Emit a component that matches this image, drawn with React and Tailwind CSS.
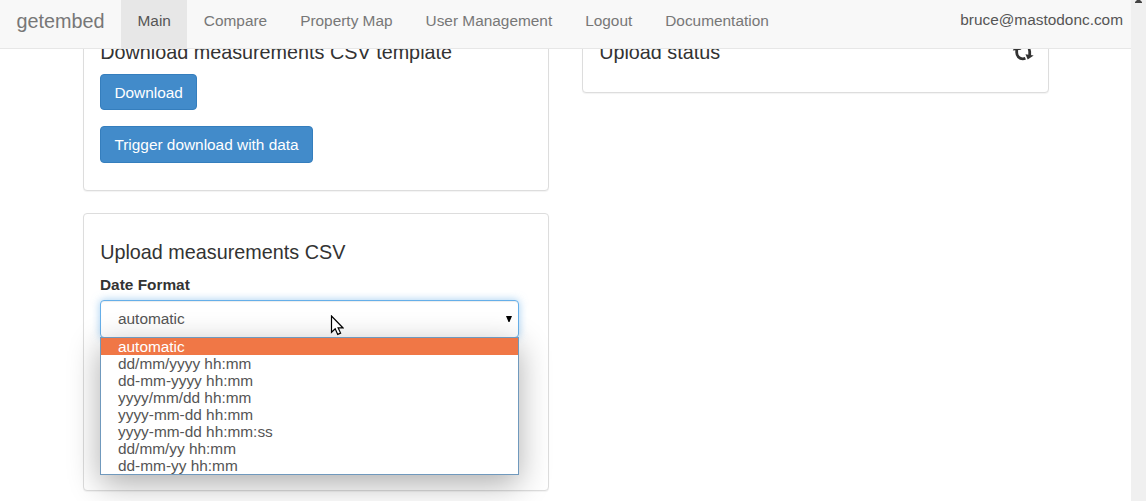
import React from "react";

const links = ["Main", "Compare", "Property Map", "User Management", "Logout", "Documentation"];
const formats = [
  "automatic",
  "dd/mm/yyyy hh:mm",
  "dd-mm-yyyy hh:mm",
  "yyyy/mm/dd hh:mm",
  "yyyy-mm-dd hh:mm",
  "yyyy-mm-dd hh:mm:ss",
  "dd/mm/yy hh:mm",
  "dd-mm-yy hh:mm",
];

function Navbar() {
  return (
    <header className="relative z-10 flex h-[49px] shrink-0 border-b border-[#e7e7e7] bg-[#f8f8f8] text-[#777]">
      <a className="w-[121px] pl-[16.5px] pt-[10px] text-[19.8px] leading-[22px]">getembed</a>
      <nav className="flex h-12">
        {links.map((label, i) => (
          <a
            key={label}
            className={
              "px-[16.5px] pt-[10px] leading-[22px] whitespace-nowrap " + (i === 0 ? "bg-[#e7e7e7] text-[#555]" : "")
            }
          >
            {label}
          </a>
        ))}
      </nav>
      <span className="ml-auto pr-2 pt-[9px] leading-[22px] text-[#555]">bruce@mastodonc.com</span>
    </header>
  );
}

function Card({ className, children }) {
  return (
    <section className={"rounded-[4px] border border-[#ddd] bg-white px-4 shadow-[0_1px_1px_rgba(0,0,0,0.05)] " + className}>
      {children}
    </section>
  );
}

function Heading({ children }) {
  return <h4 className="pl-[0.2px] text-[19.8px] leading-[22px]">{children}</h4>;
}

function RefreshIcon() {
  return (
    <svg className="h-[22px] w-[22px]" viewBox="0 0 22 22" fill="none">
      <path d="M4.700 8v3.500c0 3.400 2.600 6.300 6.100 6.300 1 0 1.900-.2 2.600-.5" stroke="#333" strokeWidth="2.800" />
      <path d="M17.700 14v-3.500c0-3.400-2.600-6.300-6.100-6.300-1 0-1.900.2-2.600.5" stroke="#333" strokeWidth="2.800" />
      <path d="M.8 9.400L3.500 4l6 4.800z" fill="#333" />
      <path d="M13.500 13.200l8.200 1.200-6 4z" fill="#333" />
    </svg>
  );
}

function Select() {
  return (
    <div className="relative mt-[4px] h-[38px] w-[419px]">
      <div className="flex h-full items-center justify-between rounded-[4px] border border-[#66afe9] bg-white pl-[17px] pr-[6px] text-[#555] shadow-[inset_0_1px_1px_rgba(0,0,0,0.075),0_0_8px_rgba(102,175,233,0.6)]">
        <span>automatic</span>
        <svg className="h-[6px] w-[6px]" viewBox="0 0 6 6">
          <path d="M0 0h6L3.500 6h-1z" fill="#000" />
        </svg>
      </div>
      <ul className="absolute left-0 top-[37px] z-10 w-[419px] border border-[#7099bd] bg-white text-[#555] shadow-[0_9px_30px_rgba(0,0,0,0.32)]">
        {formats.map((f, i) => (
          <li key={f} className={"h-[17px] pl-[17px] leading-[18px] " + (i === 0 ? "bg-[#f07746] text-white" : "")}>
            {f}
          </li>
        ))}
      </ul>
      <svg className="absolute left-[230px] top-[15px] z-20 h-[21px] w-[14px]" viewBox="0 0 14 21">
        <path
          d="M1.500 1v16.300l3.700-3.500 2.500 5.600 2.900-1.300-2.500-5.300h4.800z"
          fill="#fff"
          stroke="#000"
          strokeWidth="1.200"
        />
      </svg>
    </div>
  );
}

function Scrollbar() {
  return (
    <div className="flex w-[15px] shrink-0 justify-center bg-[#f0f0f0]">
      <svg className="h-[3px] w-[7px]" viewBox="0 0 7 3">
        <path d="M2 0h3l2 2v1H0V2z" fill="#444" />
      </svg>
    </div>
  );
}

export default function App() {
  return (
    <div className="flex h-[501px] w-full overflow-hidden bg-white font-['Liberation_Sans',Arial,sans-serif] text-[15.4px] text-[#333]">
      <div className="flex min-w-0 flex-1 flex-col overflow-hidden">
        <Navbar />
        <main className="-mt-[25px] ml-[83px] flex items-start gap-[33px]">
          <div className="flex w-[466px] flex-col gap-[22px]">
            <Card className="h-[167px] pt-4">
              <Heading>Download measurements CSV template</Heading>
              <div className="mt-[11px] flex flex-col items-start gap-4">
                <button className="h-9 rounded-[4px] border border-[#357ebd] bg-[#428bca] px-[13.4px] pt-px text-white">
                  Download
                </button>
                <button className="h-[37px] rounded-[4px] border border-[#357ebd] bg-[#428bca] px-[13.4px] text-white">
                  Trigger download with data
                </button>
              </div>
            </Card>
            <Card className="h-[278px] pt-[27px]">
              <Heading>Upload measurements CSV</Heading>
              <label className="mt-[11px] block font-bold leading-[22px]">Date Format</label>
              <Select />
            </Card>
          </div>
          <Card className="flex h-[69px] w-[467px] justify-between pr-[14px] pt-4">
            <Heading>Upload status</Heading>
            <RefreshIcon />
          </Card>
        </main>
      </div>
      <Scrollbar />
    </div>
  );
}
